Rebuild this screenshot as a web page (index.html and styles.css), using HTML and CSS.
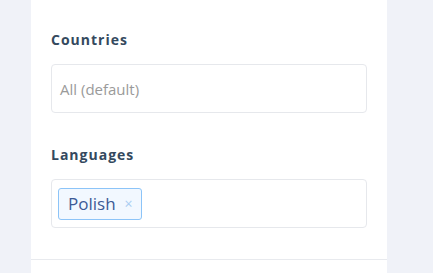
FILE: index.html
```html
<!DOCTYPE html>
<html lang="en">
  <head>
    <meta charset="UTF-8" />
    <meta name="viewport" content="width=device-width, initial-scale=1.0" />
    <title>Filters</title>
    <link rel="stylesheet" href="styles.css">
  </head>
  <body>
    <div class="panel">
      <div class="filters">
        <div class="field">
          <label class="field-label">Countries</label>
          <div class="select">
            <span class="placeholder">All (default)</span>
          </div>
        </div>

        <div class="field">
          <label class="field-label">Languages</label>
          <div class="select">
            <span class="tag">Polish <span class="tag-remove">&times;</span></span>
          </div>
        </div>
      </div>
      <div class="panel-footer"></div>
    </div>
  </body>
</html>
```

FILE: styles.css
```css
/* Page */
body {
  margin: 0;
  font-family: "Open Sans", Arial, sans-serif;
  background: #f0f2f8;
  height: 273px;
  overflow: hidden;
}

/* Panel */
.panel {
  background: white;
  margin-left: 31px;
  width: 356px;
  height: 273px;
}

.filters {
  padding: 30px 20px 31px;
  display: flex;
  flex-direction: column;
  gap: 32px;
}

.field-label {
  display: block;
  font-size: 14px;
  font-weight: 700;
  letter-spacing: 1px;
  line-height: 19px;
  color: #34495e;
  margin-bottom: 15px;
}

/* Select boxes */
.select {
  box-sizing: border-box;
  height: 49px;
  width: 316px;
  border: 1px solid #e6e8ec;
  border-radius: 4px;
  display: flex;
  align-items: center;
  padding: 0 6px;
}

.placeholder {
  padding-left: 2px;
  font-size: 15px;
  color: #9a9a9a;
}

.tag {
  box-sizing: border-box;
  height: 32px;
  display: inline-flex;
  align-items: center;
  gap: 9px;
  padding: 0 8px 0 9px;
  background: #f2f8ff;
  border: 1px solid #8cc4f8;
  border-radius: 3px;
  font-size: 17px;
  color: #3c5a96;
}

.tag-remove {
  font-size: 14px;
  color: #a9cdf2;
}

.panel-footer {
  border-top: 1px solid #e8eaee;
}
```
